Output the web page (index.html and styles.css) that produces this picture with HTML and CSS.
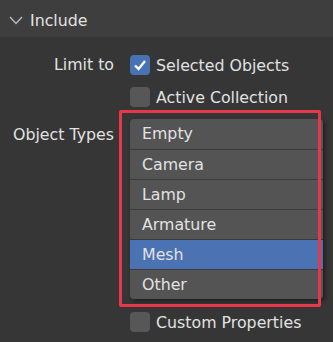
FILE: index.html
```html
<!DOCTYPE html>
<html lang="en">
  <head>
    <meta charset="utf-8" />
    <meta name="viewport" content="width=device-width, initial-scale=1.0" />
    <title>Include</title>
    <link rel="stylesheet" href="styles.css">
  </head>

  <body>
    <!-- ______PANEL HEADER______ -->
    <header class="panel-head">
      <svg class="chevron" width="14" height="9" viewBox="0 0 14 9">
        <path d="M1 1 L7 7.5 L13 1" fill="none" stroke="#b8b8b8" stroke-width="1.5" />
      </svg>
      <span>Include</span>
    </header>

    <!-- ______PANEL BODY______ -->
    <main class="panel">
      <div class="label">Limit to</div>
      <div class="field">
        <span class="check on">
          <svg width="14" height="12" viewBox="0 0 14 12">
            <path d="M2 6.5 L5.5 10 L12 2" fill="none" stroke="#fff" stroke-width="2.4" />
          </svg>
        </span>
        Selected Objects
      </div>

      <div class="label"></div>
      <div class="field">
        <span class="check"></span>
        Active Collection
      </div>

      <div class="label types">Object Types</div>
      <ul class="typelist">
        <li>Empty</li>
        <li>Camera</li>
        <li>Lamp</li>
        <li>Armature</li>
        <li class="valgt">Mesh</li>
        <li>Other</li>
      </ul>

      <div class="label"></div>
      <div class="field last">
        <span class="check"></span>
        Custom Properties
      </div>
    </main>

    <!-- markering -->
    <div class="mark"></div>
  </body>
</html>
```

FILE: styles.css
```css
body {
  margin: 0;
  background-color: #363636;
  font-family: "DejaVu Sans", sans-serif;
  font-size: 15.8px;
  color: #e2e2e2;
}

.panel-head {
  height: 37px;
  background-color: #3e3e3e;
  display: flex;
  align-items: center;
  padding: 3px 0 0 9px;
  box-sizing: border-box;
}

.chevron {
  margin-right: 7px;
  margin-top: 1px;
}

.panel {
  display: grid;
  grid-template-columns: 114px 193px;
  column-gap: 16px;
  padding-top: 12px;
}

.label {
  text-align: right;
  height: 32px;
  line-height: 32px;
}

.types {
  margin-top: 6px;
  height: 30px;
  line-height: 31px;
}

.field {
  display: flex;
  align-items: center;
  height: 32px;
}

.field.last {
  margin-top: 7px;
}

.check {
  width: 20px;
  height: 20px;
  border-radius: 4px;
  background-color: #575757;
  margin-right: 6px;
  display: flex;
  align-items: center;
  justify-content: center;
}

.check.on {
  background-color: #4772b3;
}

.typelist {
  list-style: none;
  margin: 6px 0 0;
  padding: 0;
  background-color: #545454;
  border-radius: 4px;
  box-shadow: 2px 2px 4px rgba(0, 0, 0, 0.45);
  overflow: hidden;
}

.typelist li {
  height: 30px;
  line-height: 30px;
  padding-left: 12px;
  border-top: 1px solid #3c3c3c;
  box-sizing: border-box;
}

.typelist li:first-child {
  border-top: none;
}

.typelist .valgt {
  background-color: #4b72b2;
  border-top-color: #3a3a3a;
}

/*_____MARKERING_____*/

.mark {
  position: absolute;
  left: 119px;
  top: 110px;
  width: 202px;
  height: 197px;
  box-sizing: border-box;
  border: 3.5px solid #e8364b;
  border-radius: 2px;
}
```
